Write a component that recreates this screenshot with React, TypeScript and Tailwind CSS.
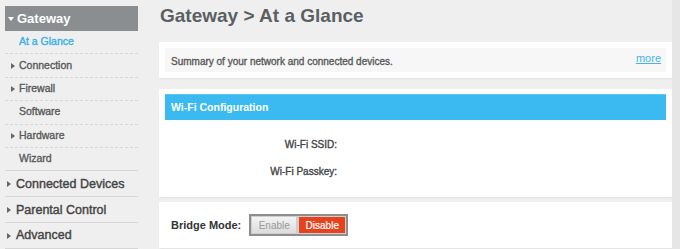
import React from "react";

const Tri = () => (
  <svg width="4" height="6" viewBox="0 0 4 6" className="shrink-0">
    <path d="M0 0 L4 3 L0 6 Z" fill="#666" />
  </svg>
);

export default function App() {
  const font = { fontFamily: "'Liberation Sans', Arial, sans-serif" };
  const sub = [
    { t: "At a Glance", arrow: false, active: true },
    { t: "Connection", arrow: true },
    { t: "Firewall", arrow: true },
    { t: "Software", arrow: false },
    { t: "Hardware", arrow: true },
    { t: "Wizard", arrow: false },
  ];
  const top = ["Connected Devices", "Parental Control", "Advanced"];
  return (
    <div className="w-[680px] h-[249px] overflow-hidden bg-[#efefef] flex" style={font}>
      <div className="w-[133px] ml-[5px] mt-[6px] shrink-0">
        <div className="h-[25px] bg-[#8b8e90] flex items-center pl-[3px] gap-[3px] text-white font-bold text-[13px]">
          <svg width="6" height="4" viewBox="0 0 6 4"><path d="M0 0 L6 0 L3 4 Z" fill="#fff" /></svg>
          <span>Gateway</span>
        </div>
        {sub.map((s, i) => (
          <div
            key={s.t}
            className={`h-[23.4px] flex items-center text-[10.5px] [-webkit-text-stroke:0.35px_currentColor] border-b ${
              i === sub.length - 1 ? "border-solid border-[#d6d6d6]" : "border-dashed border-[#d6d6d6]"
            }`}
          >
            <div className="w-[14px] flex justify-end pr-[4px]">{s.arrow && <Tri />}</div>
            <span className={s.active ? "text-[#38b0e8]" : "text-[#5a5a5a]"}>{s.t}</span>
          </div>
        ))}
        {top.map((t) => (
          <div key={t} className="h-[25.8px] flex items-center gap-[5px] pl-[2px] pt-[1px] border-b border-solid border-[#d6d6d6] text-[12.5px] [-webkit-text-stroke:0.4px_currentColor] text-[#444]">
            <Tri />
            <span>{t}</span>
          </div>
        ))}
      </div>
      <div className="ml-[21px] w-[513px] shrink-0">
        <div className="h-[42px] pt-[4px] pl-[1px] text-[19px] leading-[24px] font-bold text-[#5a5f63]">
          Gateway &gt; At a Glance
        </div>
        <div className="bg-white h-[36px] px-[6px] py-[6px] shadow-[1px_1px_2px_rgba(0,0,0,0.06)]">
          <div className="bg-[#f7f7f7] h-full flex items-center justify-between pl-[6px] pr-[5px]">
            <span className="text-[10px] [-webkit-text-stroke:0.35px_currentColor] text-[#5a5a5a] mt-[2px]">Summary of your network and connected devices.</span>
            <span className="text-[11px] text-[#45b3ea] underline -mt-[4px]">more</span>
          </div>
        </div>
        <div className="bg-white mt-[11px] h-[108px] px-[6px] pt-[5px] shadow-[1px_1px_2px_rgba(0,0,0,0.06)]">
          <div className="h-[26px] bg-[#3bbaf1] border-t border-[#5cc6f3] flex items-center pl-[6px] text-white text-[10.5px] font-bold">
            Wi-Fi Configuration
          </div>
          <div className="w-[172px] text-right text-[10px] leading-[12px] [-webkit-text-stroke:0.35px_currentColor] text-[#444] mt-[19px]">Wi-Fi SSID:</div>
          <div className="w-[172px] text-right text-[10px] leading-[12px] [-webkit-text-stroke:0.35px_currentColor] text-[#444] mt-[15px]">Wi-Fi Passkey:</div>
        </div>
        <div className="bg-white mt-[5px] h-[46px] flex items-center pl-[12px] gap-[8px] shadow-[1px_1px_2px_rgba(0,0,0,0.06)]">
          <span className="text-[11px] font-bold text-[#333]">Bridge Mode:</span>
          <div className="flex border-2 border-[#8d8d8d] bg-[#cfcfcf] p-px gap-[3px] h-[22px]">
            <div className="w-[44px] bg-gradient-to-b from-[#f4f4f4] to-[#dcdcdc] flex items-center justify-center text-[10px] text-[#9a9a9a]">Enable</div>
            <div className="w-[46px] bg-[#e6421d] flex items-center justify-center text-[10px] text-white [-webkit-text-stroke:0.2px_currentColor]">Disable</div>
          </div>
        </div>
      </div>
      <div className="w-[8px] bg-[#e6e6e6] ml-auto"></div>
    </div>
  );
}
